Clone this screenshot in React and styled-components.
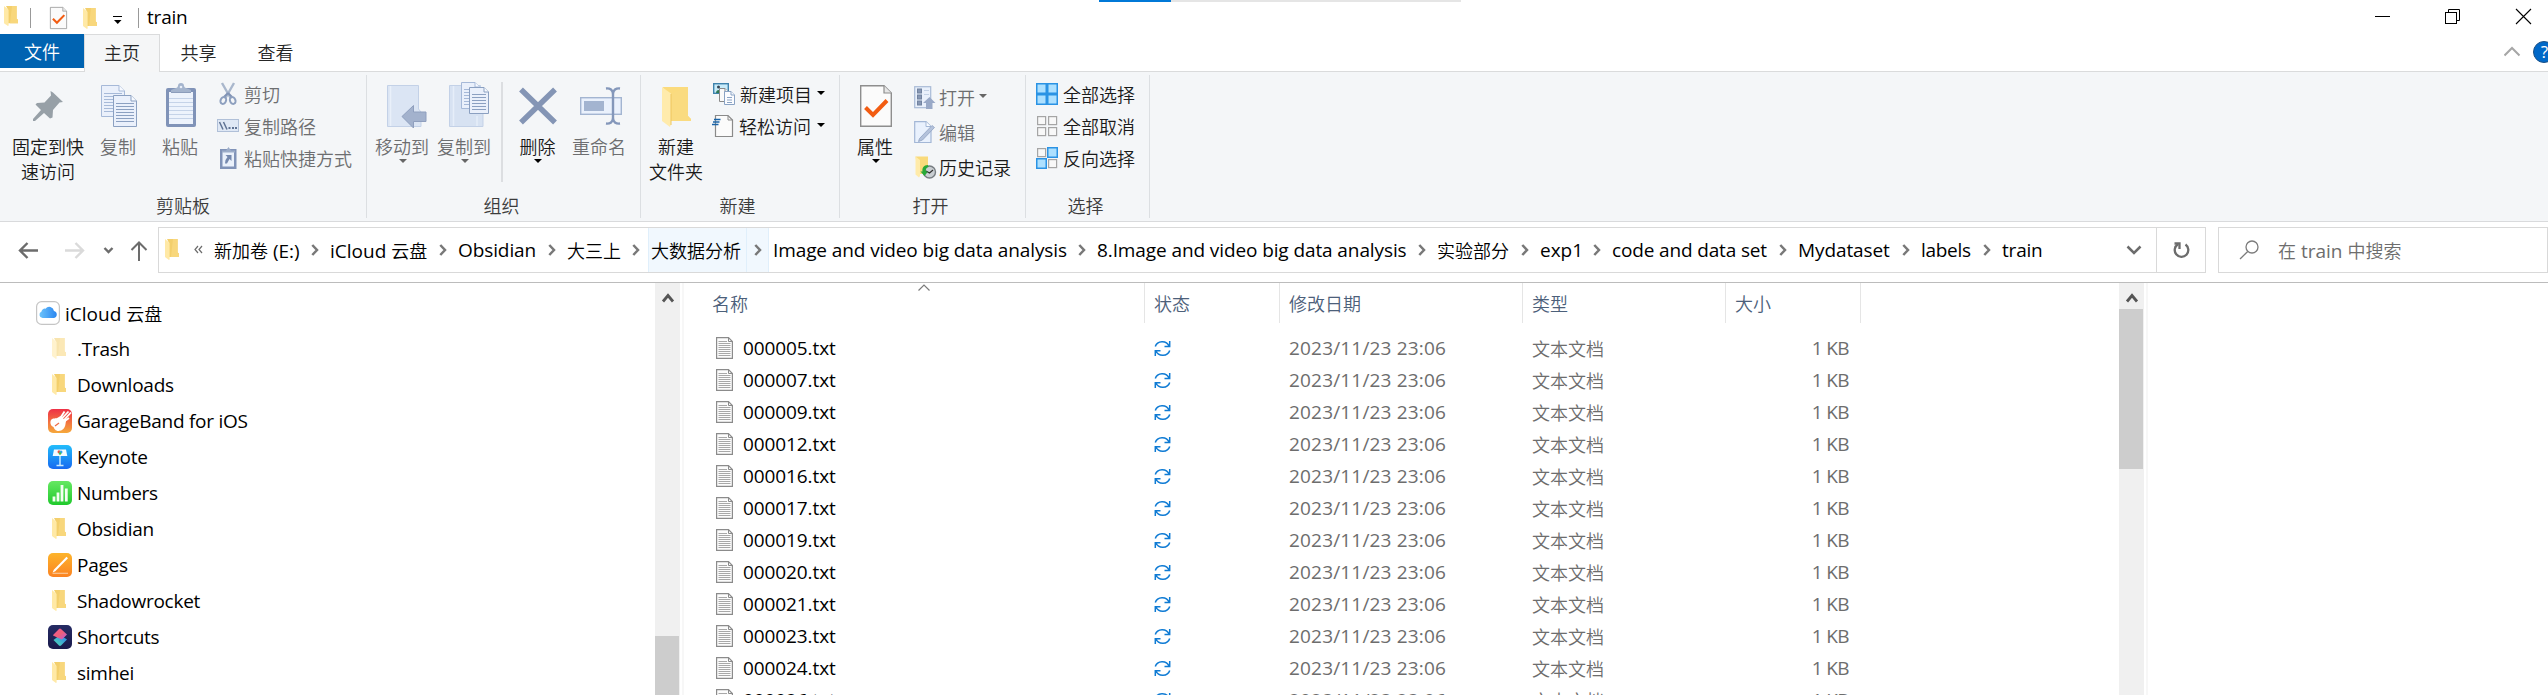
import React from "react";
import styled, { createGlobalStyle } from "styled-components";

const Global = createGlobalStyle`
  * { box-sizing: border-box; }
  html, body { margin: 0; padding: 0; overflow: hidden; background: #fff; }
  body {
    font-family: "Open Sans", "Noto Sans CJK SC", sans-serif;
    font-size: 18px;
    color: #000;
  }
  svg { display: block; flex: none; overflow: visible; }
`;

const Window = styled.div`
  width: 2548px;
  height: 695px;
  display: flex;
  flex-direction: column;
  overflow: hidden;
  background: #fff;
`;

/* Latin runs are set slightly larger than the Chinese ones. */
const Latin = styled.span`
  font-size: 19px;
  letter-spacing: ${(p) => p.$ls ?? 0}px;
  white-space: pre;
`;
const Han = styled.span`
  font-family: "Noto Sans CJK SC", sans-serif;
  font-size: 18px;
  font-weight: 350;
  white-space: pre;
`;

/* ---------- title bar ---------- */
const TitleBar = styled.header`
  position: relative;
  height: 34px;
  flex: none;
  display: flex;
  justify-content: space-between;
`;
const QuickAccess = styled.div`
  display: flex;
  align-items: center;
  height: 34px;
  padding-left: 4px;
`;
const QuickIcon = styled.div`
  width: ${(p) => p.$w}px;
  height: 34px;
  flex: none;
`;
const Divider = styled.i`
  width: 1px;
  height: 20px;
  margin: 2px ${(p) => p.$right}px 0 0;
  background: #999;
`;
const Title = styled.div`
  line-height: 34px;
`;
const LoadTrack = styled.div`
  position: absolute;
  left: 1099px;
  top: 0;
  width: 362px;
  height: 2px;
  background: #e5e5e5;
`;
const LoadBar = styled.div`
  width: 72px;
  height: 2px;
  background: #0078d7;
`;
const Caption = styled.div`
  display: flex;
  gap: 54px;
  padding: 8px 17px 0 0;
`;

/* ---------- tabs ---------- */
const Tabs = styled.nav`
  height: 38px;
  flex: none;
  display: flex;
  border-bottom: 1px solid #dadbdc;
`;
const FileTab = styled.div`
  width: 84px;
  height: 34px;
  background: #0063b1;
  color: #fff;
  text-align: center;
  line-height: 35px;
`;
const Tab = styled.div`
  width: ${(p) => (p.$active ? 76 : 77)}px;
  height: ${(p) => (p.$active ? 38 : 37)}px;
  border: 1px solid ${(p) => (p.$active ? "#dadbdc" : "transparent")};
  border-bottom: 0;
  background: ${(p) => (p.$active ? "#f5f6f7" : "#fff")};
  color: #262626;
  text-align: center;
  line-height: 35px;
`;
const TabsRight = styled.div`
  margin-left: auto;
  width: 44px;
  height: 37px;
  overflow: hidden;
`;

/* ---------- ribbon ---------- */
const Ribbon = styled.section`
  height: 150px;
  flex: none;
  display: flex;
  background: #f4f6f8;
  border-bottom: 1px solid #d9dadc;
`;
const Group = styled.div`
  width: ${(p) => p.$w}px;
  flex: none;
  display: flex;
  flex-direction: column;
`;
const GroupBody = styled.div`
  height: 121px;
  display: flex;
  padding-left: ${(p) => p.$pad}px;
`;
const GroupName = styled.div`
  line-height: 24px;
  text-align: center;
  padding-right: ${(p) => p.$shift || 0}px;
  color: #3c3c3c;
`;
const GroupLine = styled.i`
  width: 1px;
  height: 143px;
  margin-top: 3px;
  background: #dcdfe2;
`;
const InnerLine = styled.i`
  width: 2px;
  height: 100px;
  margin: 10px 7px 0 7px;
  background: #dcdee1;
`;
const Big = styled.div`
  width: ${(p) => p.$w}px;
  flex: none;
  padding-top: 10px;
  display: flex;
  flex-direction: column;
  align-items: center;
  color: ${(p) => (p.$off ? "#6d6e70" : "#1a1a1a")};
`;
const BigIcon = styled.div`
  height: 48px;
  margin-bottom: 4px;
  padding-left: ${(p) => p.$dx || 0}px;
`;
const BigLabel = styled.div`
  line-height: 24px;
  text-align: center;
  white-space: nowrap;
`;
const Column = styled.div`
  display: flex;
  flex-direction: column;
  padding: ${(p) => p.$top}px 0 0 ${(p) => p.$left}px;
`;
const Small = styled.div`
  height: ${(p) => p.$h || 32}px;
  display: flex;
  align-items: center;
  gap: ${(p) => p.$gap || 5}px;
  color: ${(p) => (p.$off ? "#6d6e70" : "#1a1a1a")};
  line-height: 24px;
  white-space: nowrap;
`;
const Caret = styled.i`
  width: 0;
  height: 0;
  border: 4px solid transparent;
  border-top-color: ${(p) => (p.$off ? "#666" : "#000")};
  border-bottom: 0;
  margin: ${(p) => (p.$under ? "0 0 0 1px" : "-2px 0 0 1px")};
`;

/* ---------- address bar ---------- */
const AddressRow = styled.div`
  height: 61px;
  flex: none;
  display: flex;
  padding: 5px 0 0 0;
  border-bottom: 1px solid #bcbcbc;
`;
const NavButtons = styled.div`
  width: 158px;
  height: 46px;
`;
const AddressBox = styled.div`
  width: 2048px;
  height: 46px;
  border: 1px solid #d9d9d9;
  display: flex;
  align-items: center;
`;
const Crumb = styled.div`
  width: ${(p) => p.$w}px;
  height: 44px;
  flex: none;
  display: flex;
  align-items: center;
  justify-content: space-between;
  line-height: 44px;
  white-space: nowrap;
  padding-right: 11px;
  position: relative;
  & > * { position: relative; }
`;
const Hover = styled.i`
  && {
    position: absolute;
    left: -3px;
    top: 0;
    width: 121px;
    height: 44px;
    background: #f1f8fe;
    border: 1px solid #e0effb;
    border-width: 0 1px;
    padding-left: 97px;
  }
  &::before {
    content: "";
    display: block;
    width: 1px;
    height: 44px;
    background: #e0effb;
  }
`;
const DropMark = styled.div`
  margin: 0 14px 0 auto;
`;
const BoxEnd = styled.div`
  width: 49px;
  height: 44px;
  border-left: 1px solid #d9d9d9;
  padding: 13px 0 0 16px;
`;
const Search = styled.div`
  width: 330px;
  height: 46px;
  margin-left: 12px;
  border: 1px solid #d9d9d9;
  display: flex;
  align-items: center;
  gap: 19px;
  padding-left: 20px;
  color: #6d6d6d;
  line-height: 44px;
`;

/* ---------- main area ---------- */
const Main = styled.main`
  flex: 1;
  min-height: 0;
  display: flex;
  overflow: hidden;
`;
const Tree = styled.aside`
  width: 655px;
  flex: none;
  padding-top: 12px;
`;
const TreeRow = styled.div`
  height: 36px;
  display: flex;
  align-items: center;
  gap: 5px;
  padding-left: ${(p) => (p.$root ? 36 : 48)}px;
  line-height: 36px;
  white-space: nowrap;
`;
const Scroll = styled.div`
  width: 25px;
  flex: none;
  background: #f0f0f0;
  display: flex;
  flex-direction: column;
`;
const ScrollUp = styled.div`
  height: 26px;
  flex: none;
  padding: 10px 0 0 7px;
`;
const Thumb = styled.div`
  width: 24px;
  height: ${(p) => p.$h}px;
  margin-top: ${(p) => p.$top}px;
  background: #cdcdcd;
  flex: none;
`;
const Splitter = styled.i`
  width: 4px;
  flex: none;
  border-right: 2px solid #f7f7f7;
`;
const Files = styled.div`
  width: 1435px;
  flex: none;
`;
const Head = styled.div`
  position: relative;
  height: 49px;
  display: flex;
  color: #4c607a;
`;
const HeadCell = styled.div`
  width: ${(p) => p.$w}px;
  height: 40px;
  flex: none;
  padding-left: ${(p) => p.$pad || 9}px;
  border-right: 1px solid #e5e5e5;
  line-height: 41px;
`;
const SortMark = styled.div`
  position: absolute;
  left: 234px;
  top: 1px;
`;
const FileRow = styled.div`
  height: 32px;
  display: flex;
  align-items: center;
  line-height: 32px;
  padding-left: 32px;
  color: #6d6d6d;
  white-space: nowrap;
`;
const Cell = styled.div`
  width: ${(p) => p.$w}px;
  height: 32px;
  flex: none;
  display: flex;
  align-items: center;
  gap: 10px;
  justify-content: ${(p) => (p.$right ? "flex-end" : "flex-start")};
  color: ${(p) => (p.$name ? "#000" : "inherit")};
`;

/* ---------- icons ---------- */
const Folder = ({ w = 14, h = 21, o = 1 }) => (
  <svg width={w} height={h} viewBox="0 0 14 21" preserveAspectRatio="none" opacity={o}>
    <path d="M2 0H12.6V13.5L14 14.5V18H4V4Z" fill="#f3cf6c" />
    <path d="M8 0H12.6V13.5L14 14.5V18H6Z" fill="#f8d77c" />
    <path d="M0 0L4.6 4V20.5L4 21L0 18Z" fill="#ffe9a6" />
  </svg>
);

const CheckDoc = ({ w, h }) => (
  <svg width={w} height={h} viewBox="0 0 32 42" preserveAspectRatio="none">
    <path d="M.7 .7H24L31.3 8V41.3H.7Z" fill="#fbfbfb" stroke="#8e8e8e" strokeWidth="1.4" />
    <path d="M24 .7V8H31.3" fill="#e6e6e6" stroke="#8e8e8e" strokeWidth="1.2" />
    <path d="M5.5 22.5L13 30L27 15.5" fill="none" stroke="#f25c12" strokeWidth="4" />
  </svg>
);

const Pin = () => (
  <svg width="30" height="48">
    <path d="M17.5 9L20 10.5L30 20L26.500 20.500L20 28L19.500 35.500L17 36.500L11 31L2 39H0V37L8 28L2.500 22.500L4 21L11.500 20.500L18 13.500Z" fill="#97a0a7" />
  </svg>
);

const Page = ({ x, y, w, h, n, c = "#93a9cb", f = "#eaf0fb", k = 6, s = 3 }) => (
  <g transform={`translate(${x} ${y})`}>
    <path d={`M.5 .5H${w - k}L${w - 0.5} ${k}V${h - 0.5}H.5Z`} fill={f} stroke={c} />
    <path d={`M${w - k} .5V${k}H${w - 0.5}`} fill="#f7faff" stroke={c} />
    {Array.from({ length: n }, (_, i) => (
      <path key={i} d={`M3 ${k + 2.5 + i * s}H${w - 3}`} stroke={c} />
    ))}
  </g>
);

const CopyIcon = () => (
  <svg width="36" height="48">
    <Page x={0} y={3} w={24} h={32} n={7} c="#a6b9d8" />
    <Page x={12} y={13} w={24} h={32} n={7} c="#8ba0c1" />
  </svg>
);

const PasteIcon = () => (
  <svg width="30" height="48">
    <rect x="0" y="6" width="30" height="39" rx="2" fill="#8093b8" />
    <rect x="3" y="10" width="24" height="32" fill="#edf3fc" />
    {[16, 20, 24, 28, 32, 36].map((y) => (
      <path key={y} d={`M3 ${y}.5H27`} stroke="#c5d3e8" />
    ))}
    <path d="M5 11V8L10 6C11 6 11.500 5 12 4A3 3 0 0 1 18 4C18.500 5 19 6 20 6L25 8V11Z" fill="#a4b4cd" />
    <path d="M5 10.500H25" stroke="#8c9dbb" />
    <circle cx="15" cy="5" r="1.300" fill="#e8eef8" />
  </svg>
);

const CutIcon = () => (
  <svg width="22" height="24" fill="none">
    <path d="M5 1L13.500 16M17 1L8.500 16" stroke="#a9b7cc" strokeWidth="2.400" />
    <path d="M11 11L7 15M11 11L15 15" stroke="#8093b5" strokeWidth="2" />
    <ellipse cx="6.300" cy="18.500" rx="2.700" ry="3.500" transform="rotate(25 6.300 18.500)" stroke="#8ea0bf" strokeWidth="2" />
    <ellipse cx="15.700" cy="18.500" rx="2.700" ry="3.500" transform="rotate(-25 15.700 18.500)" stroke="#8ea0bf" strokeWidth="2" />
  </svg>
);

const PathIcon = () => (
  <svg width="22" height="24">
    <rect x=".5" y="5.500" width="21" height="12" fill="#dfe8f5" stroke="#b0c0d8" />
    <path d="M2.500 8L6 15.500M6.500 8L10 15.500" stroke="#5f7394" strokeWidth="1.500" />
    <path d="M11.500 14H13.500M15 14H17M18 14H20" stroke="#5f7394" strokeWidth="2" />
  </svg>
);

const ShortcutIcon = () => (
  <svg width="22" height="24">
    <rect x="3" y="3" width="16.500" height="20" fill="#8093b8" />
    <rect x="5.500" y="6" width="11.500" height="14.500" fill="#eaf1fb" />
    <path d="M5 4.500H9L11.500 1L14 4.500H18V6.500H5Z" fill="#9cadc9" />
    <path d="M8.500 9H14.500V15L12.500 13L10 17.500H8L8.500 14L10.500 11Z" fill="#7589ae" />
  </svg>
);

const MoveIcon = () => (
  <svg width="40" height="48">
    <path d="M.5 3.500H31.500V27L34 30V44.500H.5Z" fill="#dbe5f4" stroke="#c3d1e7" />
    <path d="M3.500 4V44" stroke="#e9f0fa" strokeWidth="1.500" />
    <path d="M15 34.500L26.500 23.500V30H39V39.500H26.500V46Z" fill="#a3b2cd" stroke="#8f9fbe" />
  </svg>
);

const CopyToIcon = () => (
  <svg width="41" height="48">
    <path d="M.5 3.500H31.500V28L34 31V44.500H.5Z" fill="#d7e2f2" stroke="#c3d1e7" />
    <path d="M4.500 4V44M28 34V44" stroke="#e6eef9" strokeWidth="1.500" />
    <Page x={12} y={0} w={19} h={27} n={6} c="#a6b9d8" k={5} />
    <Page x={20} y={5} w={20} h={27} n={6} c="#8ba0c1" k={5} />
  </svg>
);

const DeleteIcon = () => (
  <svg width="38" height="48">
    <path d="M2 7.500L36 40.500M36 7.500L2 40.500" stroke="#8495b5" strokeWidth="5.500" />
  </svg>
);

const RenameIcon = () => (
  <svg width="42" height="48" fill="none">
    <rect x=".7" y="15.700" width="40.600" height="16.600" fill="#eaf1fc" stroke="#a3b5d1" strokeWidth="1.400" />
    <rect x="4" y="19" width="20" height="10" fill="#a3b4d0" />
    <path d="M26 6.500C30 6 33 8 33 12V36C33 40 30 42 26 41.500M40 6.500C36 6 33 8 33 12V36C33 40 36 42 40 41.500" stroke="#8497ba" strokeWidth="2.400" />
  </svg>
);

const NewFolderIcon = () => (
  <svg width="29" height="48">
    <path d="M1 5H26V34L29 37V39H8Z" fill="#fbdb7d" />
    <path d="M9 12L26 5V34L29 37V39H9Z" fill="#fadb80" />
    <path d="M0 5L9 11.500V42L8 45L0 39Z" fill="#ffebac" />
    <path d="M9 12V43" stroke="#eec65f" />
  </svg>
);

const NewItemIcon = () => (
  <svg width="24" height="24">
    <rect x="1.700" y="1.700" width="14.600" height="9.600" fill="#c8ecfa" stroke="#3f83ad" strokeWidth="1.400" />
    <circle cx="6.500" cy="5" r="1.500" fill="#345" />
    <path d="M4 11C4 7 9 7 9 11Z" fill="#2f7a57" />
    <Page x={7} y={6} w={10} h={14} n={0} c="#8a8a8a" f="#fafafa" k={4} />
    <Page x={12} y={9} w={11} h={14} n={3} c="#8aa3c4" f="#fbfcff" k={4} s={2.5} />
  </svg>
);

const EasyIcon = () => (
  <svg width="22" height="24">
    <path d="M3.500 1.500H16L20.500 6V22.500H3.500Z" fill="#fbfbfb" stroke="#8a8a8a" strokeWidth="1.200" />
    <path d="M16 1.500V6H20.500" fill="none" stroke="#8a8a8a" />
    <path d="M2 5.500H8.500M1 8H7.500M0 10.500H6.500" stroke="#1a64a8" strokeWidth="1.500" />
  </svg>
);

const OpenIcon = () => (
  <svg width="22" height="24">
    <rect x=".7" y="1.700" width="16" height="21" fill="#e9f0fb" stroke="#a9bbd6" strokeWidth="1.200" />
    {[4, 10, 16].map((y) => (
      <rect key={y} x="3.500" y={y} width="4" height="4" fill="#8797b4" stroke="#71829f" />
    ))}
    <path d="M10 5.500H15M10 9.500H15" stroke="#c3d1e5" />
    <path d="M15.500 12L21.500 18H18.500V24H12V18H9Z" fill="#99a9c7" />
  </svg>
);

const EditIcon = () => (
  <svg width="22" height="24">
    <path d="M.7 1.700H12L17 6.500V22.500H.7Z" fill="#e9f1fd" stroke="#a3b7d6" strokeWidth="1.200" />
    <path d="M12 1.700V6.500H17" fill="#f8fbff" stroke="#a3b7d6" />
    <path d="M5.500 18.500L18 5.500L20.500 7.500L8.500 20L4.500 21.500Z" fill="#b4c2db" stroke="#8fa2c2" strokeWidth=".8" />
  </svg>
);

const HistoryIcon = () => (
  <svg width="22" height="24">
    <path d="M1.500 1.500H14V14L16 19H4Z" fill="#f9da7b" />
    <path d="M1.500 1.500L6 5V21L5 22.500L1.500 19.500Z" fill="#ffebaa" />
    <circle cx="15.500" cy="17" r="6" fill="#c9ced2" stroke="#777d82" strokeWidth="1.400" />
    <path d="M12 16L15.500 18L19 15" stroke="#333" fill="none" strokeWidth="1.200" />
    <path d="M14 10C9.500 10 8 13 8.500 16.500H6.500L10.500 21L14 16.500H12C11.500 14 12.500 12.500 14.500 12Z" fill="#27a838" />
  </svg>
);

const SelectIcon = ({ on }) => (
  <svg width="22" height="24">
    {[0, 1, 2, 3].map((i) => {
      const x = (i % 2) * 11;
      const y = (i > 1 ? 11 : 0) + 1;
      return on[i] ? (
        <rect key={i} x={x + 0.75} y={y + 0.75} width="9.500" height="9.500" fill="#ade0ff" stroke="#2b93e4" strokeWidth="1.500" />
      ) : (
        <rect key={i} x={x + 1.6} y={y + 1.6} width="8" height="8" fill="#f8f8f8" stroke="#a5a5a5" strokeWidth="1.200" />
      );
    })}
  </svg>
);

const Chevron = () => (
  <svg width="8" height="12" fill="none">
    <path d="M1.300 1L6 6L1.300 11" stroke="#787878" strokeWidth="2.500" />
  </svg>
);

const NavIcons = () => (
  <svg width="158" height="46" fill="none">
    <path d="M38 23.500H20.500M27.500 16L20 23.500L27.500 31" stroke="#6c6c6c" strokeWidth="2.400" />
    <path d="M65 23.500H82.500M75.500 16L83 23.500L75.500 31" stroke="#dadada" strokeWidth="2.400" />
    <path d="M104.500 21L108.500 25L112.500 21" stroke="#6c6c6c" strokeWidth="2.400" />
    <path d="M139 34V16M131.500 23L139 15.500L146.500 23" stroke="#6c6c6c" strokeWidth="2" />
  </svg>
);

const UpMark = () => (
  <svg width="12" height="10" fill="none">
    <path d="M1 8.500L6 2.500L11 8.500" stroke="#555" strokeWidth="2.800" />
  </svg>
);

const FileIcon = () => (
  <svg width="17" height="22">
    <path d="M.6 .6H12.500L16.400 4.500V21.400H.6Z" fill="#fcfcfc" stroke="#8b8b8b" strokeWidth="1.200" />
    <path d="M12.500 .6V4.500H16.400" stroke="#8b8b8b" fill="none" />
    {[4.5, 6.5, 8.5, 10.5, 12.5, 14.5, 16.5, 18.5].map((y, i) => (
      <path key={y} d={`M2.500 ${y}H${i ? 14.5 : 11}`} stroke="#a8a8a8" />
    ))}
  </svg>
);

const SyncIcon = () => (
  <svg width="17" height="17" fill="none" stroke="#0f7bd4" strokeWidth="1.500">
    <path d="M1.300 6.500A7.200 6.500 0 0 1 15 6M15.700 1V6.500H10.500" />
    <path d="M15.700 10.500A7.200 6.500 0 0 1 2 11M1.300 16V10.800H6.500" />
  </svg>
);

const AppTile = ({ kind }) => {
  const colors = {
    garage: ["#ee3046", "#f6a93b"],
    keynote: ["#22bdfb", "#1769f0"],
    numbers: ["#66e862", "#1fc92c"],
    pages: ["#fdb42b", "#fb8322"],
    shortcuts: ["#252b63", "#191a4b"],
  }[kind];
  return (
    <svg width="24" height="24" viewBox="0 0 24 24">
      <defs>
        <linearGradient id={kind} x1="0" y1="0" x2="0" y2="1">
          <stop offset="0" stopColor={colors[0]} />
          <stop offset="1" stopColor={colors[1]} />
        </linearGradient>
        <linearGradient id="sc-top" x1="0" y1="0" x2="1" y2="1">
          <stop offset="0" stopColor="#f0589c" />
          <stop offset=".5" stopColor="#ef5f78" />
          <stop offset="1" stopColor="#b65be0" />
        </linearGradient>
        <linearGradient id="sc-bottom" x1="0" y1="1" x2="1" y2="0">
          <stop offset="0" stopColor="#53dfb0" />
          <stop offset="1" stopColor="#2a7cf0" />
        </linearGradient>
      </defs>
      <rect width="24" height="24" rx="5" fill={`url(#${kind})`} />
      {kind === "garage" && (
        <g>
          <path d="M3 11C5 8.500 8 10 10 8.500L12.500 7L18 12L17.500 15C17 19 14.500 22 10.500 22C7.500 22 6 19.500 5.500 18C3 17 1.500 14 3 11Z" fill="#fff" />
          <path d="M11 11L16.500 2.500M12.500 11L20.500 2.500M15 12L23 3.500M15.500 13L21 9" stroke="#fff" strokeWidth="1.800" />
          <path d="M7 17L11 14" stroke="#ef6a45" strokeWidth="1.200" />
        </g>
      )}
      {kind === "keynote" && (
        <g>
          <path d="M6 4.500H18L19.300 11H4.700Z" fill="#f5fbff" />
          <path d="M12 11V20M8.500 20.500H15.500" stroke="#c9e9ff" strokeWidth="1.500" />
          <circle cx="11" cy="6.800" r="1.500" fill="#ef563f" />
          <circle cx="13" cy="7" r="1.500" fill="#34a7ed" />
          <circle cx="12" cy="8.500" r="1.300" fill="#45bf4f" />
        </g>
      )}
      {kind === "numbers" && (
        <path d="M6 20.500V15.500M10 20.500V11.500M14 20.500V4M18.300 20.500V7.500" stroke="#f4fff2" strokeWidth="2.800" />
      )}
      {kind === "pages" && (
        <g>
          <path d="M4.500 20.300H20" stroke="#fff" strokeOpacity=".5" strokeWidth="1.200" />
          <path d="M4.700 19.500L5.800 16.800L18.500 3.800L20 5.300L7.300 18.300Z" fill="#fff" />
        </g>
      )}
      {kind === "shortcuts" && (
        <g>
          <path d="M5.500 15L12 10L19 14.500L13 20.500Q12 21.300 11 20.500Z" fill="url(#sc-bottom)" />
          <path d="M5.500 9.500L11 4Q12 3 13 4L19 9.500L14 14.500L12.500 14L5 10.500Z" fill="url(#sc-top)" />
        </g>
      )}
    </svg>
  );
};

const CloudTile = () => (
  <svg width="24" height="24">
    <defs>
      <linearGradient id="cloud" x1="0" y1="0" x2="1" y2="0">
        <stop offset="0" stopColor="#6cc3fb" />
        <stop offset="1" stopColor="#2a86f0" />
      </linearGradient>
    </defs>
    <rect x=".6" y=".6" width="22.800" height="22.800" rx="5" fill="#fff" stroke="#c5c5c5" strokeWidth="1.200" />
    <path d="M6.500 17A3.400 3.400 0 0 1 5.500 10.500A3.300 3.300 0 0 1 9.500 7.700A4.800 4.800 0 0 1 18 10A3.600 3.600 0 0 1 18 17Z" fill="url(#cloud)" />
  </svg>
);

const FolderSlot = styled.div`
  width: 24px;
  height: 24px;
  padding: 1px 0 0 4px;
`;

/* ---------- data ---------- */
const tree = [
  [".Trash", "faded"],
  ["Downloads", "folder"],
  ["GarageBand for iOS", "garage"],
  ["Keynote", "keynote"],
  ["Numbers", "numbers"],
  ["Obsidian", "folder"],
  ["Pages", "pages"],
  ["Shadowrocket", "folder"],
  ["Shortcuts", "shortcuts"],
  ["simhei", "folder"],
];
const files = ["05", "07", "09", "12", "16", "17", "19", "20", "21", "23", "24", "26"];

const crumbs = [
  { w: 116, t: <span><Han>新加卷</Han><Latin> (E:)</Latin></span> },
  { w: 128, t: <span><Latin>iCloud </Latin><Han>云盘</Han></span> },
  { w: 109, t: <Latin $ls={-0.1}>Obsidian</Latin> },
  { w: 84, t: <Han>大三上</Han> },
  { w: 122, t: <Han>大数据分析</Han>, hover: true },
  { w: 324, t: <Latin $ls={-0.1}>Image and video big data analysis</Latin> },
  { w: 340, t: <Latin $ls={-0.1}>8.Image and video big data analysis</Latin> },
  { w: 103, t: <Han>实验部分</Han> },
  { w: 72, t: <Latin>exp1</Latin> },
  { w: 186, t: <Latin $ls={-0.15}>code and data set</Latin> },
  { w: 123, t: <Latin $ls={-0.1}>Mydataset</Latin> },
  { w: 81, t: <Latin $ls={-0.3}>labels</Latin> },
];

const BigButton = ({ w, icon, dx, lines, off, caret }) => (
  <Big $w={w} $off={off}>
    <BigIcon $dx={dx}>{icon}</BigIcon>
    {lines.map((l) => (
      <BigLabel key={l}><Han>{l}</Han></BigLabel>
    ))}
    {caret && <Caret $off={off} $under />}
  </Big>
);

const SmallButton = ({ icon, text, off, caret, h, gap }) => (
  <Small $off={off} $h={h} $gap={gap}>
    {icon}
    <Han>{text}</Han>
    {caret && <Caret $off={off} />}
  </Small>
);

export default function App() {
  return (
    <Window>
      <Global />
      <TitleBar>
        <QuickAccess>
          <QuickIcon $w={26}><svg width="14" height="34"><g transform="translate(0 6)"><Folder h={20} /></g></svg></QuickIcon>
          <Divider $right={19} />
          <QuickIcon $w={33}><svg width="17" height="34"><g transform="translate(0 7)"><CheckDoc w={17} h={22} /></g></svg></QuickIcon>
          <QuickIcon $w={30}><svg width="14" height="34"><g transform="translate(0 8)"><Folder /></g></svg></QuickIcon>
          <QuickIcon $w={25}>
            <svg width="10" height="34"><path d="M0 16.500H9" stroke="#000" /><path d="M1 20H8.500L4.750 24Z" /></svg>
          </QuickIcon>
          <Divider $right={8} />
          <Title><Latin $ls={-0.2}>train</Latin></Title>
        </QuickAccess>
        <LoadTrack><LoadBar /></LoadTrack>
        <Caption>
          <svg width="16" height="16"><path d="M0 8.500H15" stroke="#000" /></svg>
          <svg width="16" height="16" fill="none" stroke="#000"><rect x=".5" y="4.500" width="11" height="11" /><path d="M3.500 4V1.500H14.500V12.500H12" /></svg>
          <svg width="16" height="16" stroke="#000" strokeWidth="1.100"><path d="M1 1L16 16M16 1L1 16" /></svg>
        </Caption>
      </TitleBar>

      <Tabs>
        <FileTab><Han>文件</Han></FileTab>
        <Tab $active><Han>主页</Han></Tab>
        <Tab><Han>共享</Han></Tab>
        <Tab><Han>查看</Han></Tab>
        <TabsRight>
          <svg width="44" height="37" fill="none">
            <path d="M0.500 21.500L8 14L15.500 21.500" stroke="#a6a6a6" strokeWidth="2" />
            <circle cx="40" cy="18" r="10.500" fill="#0068c8" stroke="#1b5085" />
            <text x="40.500" y="24" textAnchor="middle" fontSize="17" fill="#fff">?</text>
          </svg>
        </TabsRight>
      </Tabs>

      <Ribbon>
        <Group $w={366}>
          <GroupBody $pad={6}>
            <BigButton w={84} icon={<Pin />} lines={["固定到快", "速访问"]} />
            <BigButton w={56} icon={<CopyIcon />} dx={2} lines={["复制"]} off />
            <BigButton w={68} icon={<PasteIcon />} dx={2} lines={["粘贴"]} off />
            <Column $top={6} $left={3}>
              <SmallButton icon={<CutIcon />} text="剪切" off />
              <SmallButton icon={<PathIcon />} text="复制路径" off />
              <SmallButton icon={<ShortcutIcon />} text="粘贴快捷方式" off />
            </Column>
          </GroupBody>
          <GroupName><Han>剪贴板</Han></GroupName>
        </Group>
        <GroupLine />
        <Group $w={273}>
          <GroupBody $pad={3}>
            <BigButton w={64} icon={<MoveIcon />} dx={9} lines={["移动到"]} off caret />
            <BigButton w={60} icon={<CopyToIcon />} dx={11} lines={["复制到"]} off caret />
            <InnerLine />
            <BigButton w={55} icon={<DeleteIcon />} lines={["删除"]} caret />
            <BigButton w={68} icon={<RenameIcon />} dx={3} lines={["重命名"]} off />
          </GroupBody>
          <GroupName $shift={4}><Han>组织</Han></GroupName>
        </Group>
        <GroupLine />
        <Group $w={198}>
          <GroupBody $pad={2}>
            <BigButton w={66} icon={<NewFolderIcon />} lines={["新建", "文件夹"]} />
            <Column $top={6} $left={3}>
              <SmallButton icon={<NewItemIcon />} text="新建项目" gap={4} caret />
              <SmallButton icon={<EasyIcon />} text="轻松访问" gap={5} caret />
            </Column>
          </GroupBody>
          <GroupName $shift={5}><Han>新建</Han></GroupName>
        </Group>
        <GroupLine />
        <Group $w={185}>
          <GroupBody $pad={7}>
            <BigButton w={56} icon={<svg width="32" height="48"><g transform="translate(0 3)"><CheckDoc w={32} h={42} /></g></svg>} dx={1} lines={["属性"]} caret />
            <Column $top={7} $left={11}>
              <SmallButton icon={<OpenIcon />} text="打开" gap={3} h={35} off caret />
              <SmallButton icon={<EditIcon />} text="编辑" gap={3} h={35} off />
              <SmallButton icon={<HistoryIcon />} text="历史记录" gap={3} h={36} />
            </Column>
          </GroupBody>
          <GroupName $shift={4}><Han>打开</Han></GroupName>
        </Group>
        <GroupLine />
        <Group $w={123}>
          <GroupBody $pad={0}>
            <Column $top={6} $left={10}>
              <SmallButton icon={<SelectIcon on={[1, 1, 1, 1]} />} text="全部选择" />
              <SmallButton icon={<SelectIcon on={[0, 0, 0, 0]} />} text="全部取消" />
              <SmallButton icon={<SelectIcon on={[0, 1, 1, 0]} />} text="反向选择" />
            </Column>
          </GroupBody>
          <GroupName $shift={4}><Han>选择</Han></GroupName>
        </Group>
        <GroupLine />
      </Ribbon>

      <AddressRow>
        <NavButtons><NavIcons /></NavButtons>
        <AddressBox>
          <svg width="55" height="44">
            <g transform="translate(6 11)"><Folder /></g>
            <path d="M39 18L36 21.500L39 25M43 18L40 21.500L43 25" fill="none" stroke="#6c6c6c" strokeWidth="1.200" />
          </svg>
          {crumbs.map((c, i) => (
            <Crumb key={i} $w={c.w}>
              {c.hover && <Hover />}
              {c.t}
              <Chevron />
            </Crumb>
          ))}
          <Latin $ls={-0.2}>train</Latin>
          <DropMark>
            <svg width="16" height="10" fill="none">
              <path d="M1.500 1.500L8 8L14.500 1.500" stroke="#6c6c6c" strokeWidth="2.500" />
            </svg>
          </DropMark>
          <BoxEnd>
            <svg width="18" height="18" fill="none">
              <path d="M12.500 3.500A6.800 6.800 0 1 1 5 3.200" stroke="#6c6c6c" strokeWidth="2.300" />
              <path d="M1.500 2.500H6.500V8" stroke="#6c6c6c" strokeWidth="2.300" />
            </svg>
          </BoxEnd>
        </AddressBox>
        <Search>
          <svg width="20" height="20" fill="none" stroke="#7b7b7b" strokeWidth="1.300">
            <circle cx="13" cy="7" r="6" /><path d="M8.700 11.500L1 19" />
          </svg>
          <span><Han>在</Han><Latin> train </Latin><Han>中搜索</Han></span>
        </Search>
      </AddressRow>

      <Main>
        <Tree>
          <TreeRow $root><CloudTile /><span><Latin>iCloud </Latin><Han>云盘</Han></span></TreeRow>
          {tree.map(([name, kind]) => (
            <TreeRow key={name}>
              {kind === "folder" || kind === "faded" ? (
                <FolderSlot><Folder o={kind === "faded" ? 0.55 : 1} /></FolderSlot>
              ) : (
                <AppTile kind={kind} />
              )}
              <Latin $ls={-0.25}>{name}</Latin>
            </TreeRow>
          ))}
        </Tree>
        <Scroll>
          <ScrollUp><UpMark /></ScrollUp>
          <Thumb $top={327} $h={60} />
        </Scroll>
        <Splitter />
        <Files>
          <Head>
            <HeadCell $w={461} $pad={28}><Han>名称</Han></HeadCell>
            <HeadCell $w={135}><Han>状态</Han></HeadCell>
            <HeadCell $w={243}><Han>修改日期</Han></HeadCell>
            <HeadCell $w={203}><Han>类型</Han></HeadCell>
            <HeadCell $w={135}><Han>大小</Han></HeadCell>
            <SortMark>
              <svg width="12" height="7" fill="none"><path d="M.5 6.500L6 1L11.500 6.500" stroke="#7a7a7a" strokeWidth="1.200" /></svg>
            </SortMark>
          </Head>
          {files.map((f) => (
            <FileRow key={f}>
              <Cell $w={438} $name><FileIcon /><Latin $ls={-0.1}>{`0000${f}.txt`}</Latin></Cell>
              <Cell $w={135}><SyncIcon /></Cell>
              <Cell $w={243}><Latin $ls={0.18}>2023/11/23 23:06</Latin></Cell>
              <Cell $w={203}><Han>文本文档</Han></Cell>
              <Cell $w={114} $right><Latin $ls={-0.6}>1 KB</Latin></Cell>
            </FileRow>
          ))}
        </Files>
        <Scroll>
          <ScrollUp><UpMark /></ScrollUp>
          <Thumb $top={0} $h={160} />
        </Scroll>
        <Splitter />
      </Main>
    </Window>
  );
}
